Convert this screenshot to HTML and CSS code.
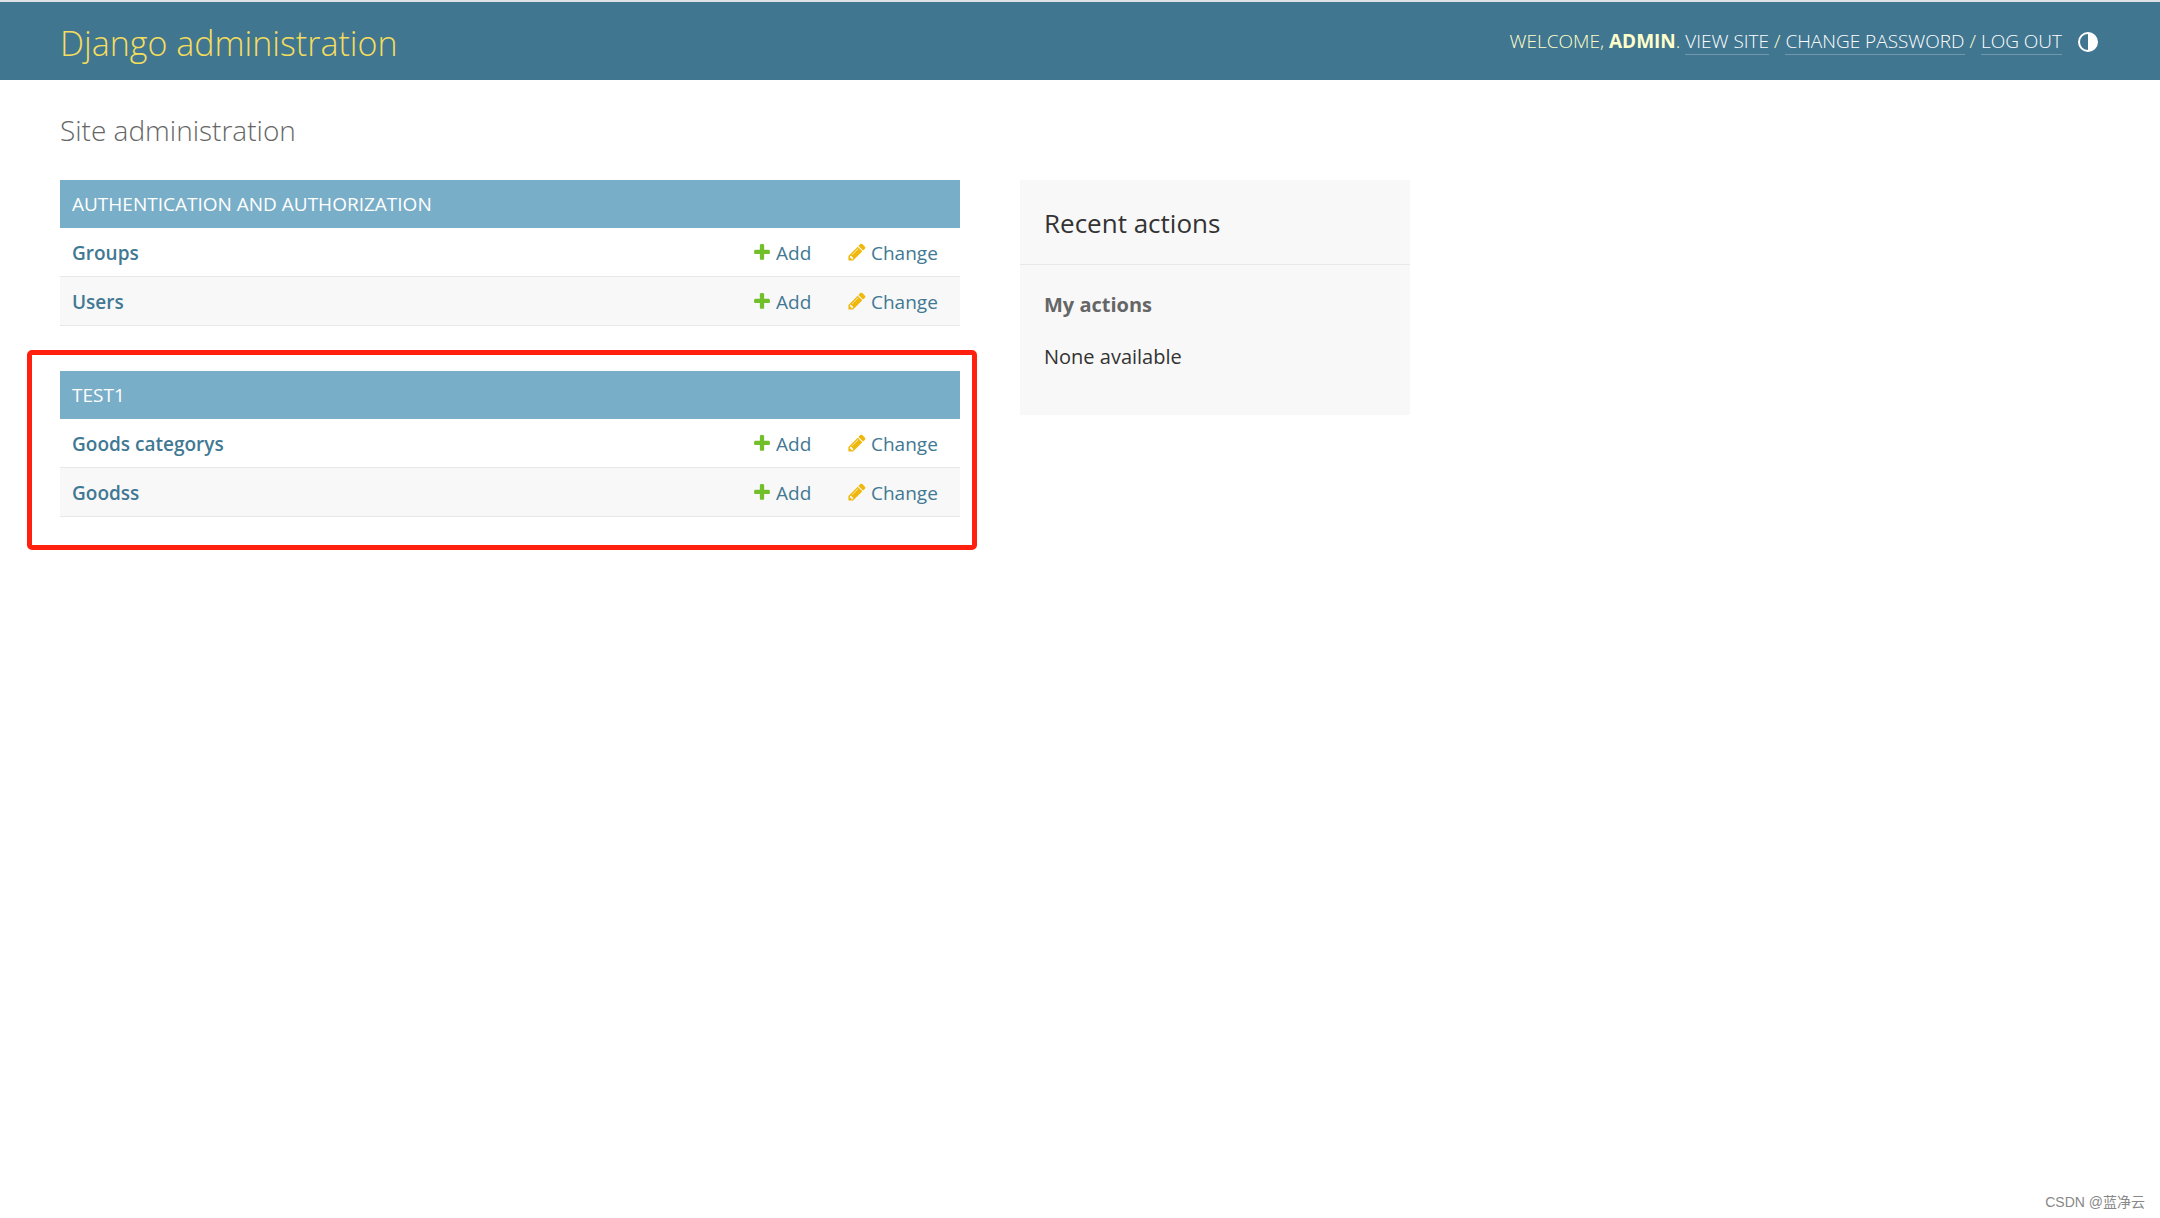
FILE: index.html
```html
<!DOCTYPE html>
<html lang="en">
<head>
<meta charset="utf-8">
<title>Site administration | Django site admin</title>
<meta name="viewport" content="width=device-width, initial-scale=1">
<link rel="stylesheet" href="styles.css">
</head>
<body>
<svg class="sprite" aria-hidden="true">
  <symbol id="icon-add" viewBox="0 0 1792 1792"><path fill="#70bf2b" d="M1600 796v192q0 40-28 68t-68 28h-416v416q0 40-28 68t-68 28h-192q-40 0-68-28t-28-68v-416h-416q-40 0-68-28t-28-68v-192q0-40 28-68t68-28h416v-416q0-40 28-68t68-28h192q40 0 68 28t28 68v416h416q40 0 68 28t28 68z"/></symbol>
  <symbol id="icon-change" viewBox="0 0 1792 1792"><path fill="#efb80b" d="M491 1536l91-91-235-235-91 91v107h128v128h107zm523-928q0-22-22-22-10 0-17 7l-542 542q-7 7-7 17 0 22 22 22 10 0 17-7l542-542q7-7 7-17zm-54-192l416 416-832 832h-416v-416zm683 96q0 53-37 90l-166 166-416-416 166-165q36-38 90-38 53 0 91 38l235 234q37 39 37 91z"/></symbol>
</svg>
<header class="header">
  <div class="site-name"><a href="#">Django administration</a></div>
  <div class="user-tools">
    <span>Welcome, <strong>admin</strong>. <a href="#">View site</a> / <a href="#">Change password</a> / <a href="#">Log out</a></span>
    <button class="theme-toggle" type="button" aria-label="Toggle theme">
      <svg viewBox="0 0 20 20"><circle cx="10" cy="10" r="9" fill="none" stroke="#fff" stroke-width="2"/><path d="M10 1a9 9 0 0 1 0 18z" fill="#fff"/></svg>
    </button>
  </div>
</header>
<main class="content">
  <h1>Site administration</h1>
  <div class="columns">
    <div class="apps">
      <div class="module">
        <table>
          <caption><a href="#">Authentication and Authorization</a></caption>
          <tbody>
            <tr><th scope="row"><a href="#">Groups</a></th><td class="add"><a href="#"><svg class="icon"><use href="#icon-add"/></svg>Add</a></td><td class="change"><a href="#"><svg class="icon"><use href="#icon-change"/></svg>Change</a></td></tr>
            <tr><th scope="row"><a href="#">Users</a></th><td class="add"><a href="#"><svg class="icon"><use href="#icon-add"/></svg>Add</a></td><td class="change"><a href="#"><svg class="icon"><use href="#icon-change"/></svg>Change</a></td></tr>
          </tbody>
        </table>
      </div>
      <div class="module marked">
        <table>
          <caption><a href="#">Test1</a></caption>
          <tbody>
            <tr><th scope="row"><a href="#">Goods categorys</a></th><td class="add"><a href="#"><svg class="icon"><use href="#icon-add"/></svg>Add</a></td><td class="change"><a href="#"><svg class="icon"><use href="#icon-change"/></svg>Change</a></td></tr>
            <tr><th scope="row"><a href="#">Goodss</a></th><td class="add"><a href="#"><svg class="icon"><use href="#icon-add"/></svg>Add</a></td><td class="change"><a href="#"><svg class="icon"><use href="#icon-change"/></svg>Change</a></td></tr>
          </tbody>
        </table>
      </div>
    </div>
    <aside class="recent">
      <h2>Recent actions</h2>
      <h3>My actions</h3>
      <p>None available</p>
    </aside>
  </div>
</main>
<footer class="watermark">CSDN @蓝净云</footer>
</body>
</html>
```
FILE: styles.css
```css
* {
  box-sizing: border-box;
}

body {
  margin: 0;
  min-height: 100vh;
  display: flex;
  flex-direction: column;
  background: #fff;
  color: #333;
  font: 400 20px/24px "Open Sans", "Noto Sans", sans-serif;
}

a {
  color: #417893;
  text-decoration: none;
}

.sprite {
  display: none;
}

.header {
  display: flex;
  justify-content: space-between;
  align-items: center;
  height: 80px;
  padding: 2px 62px 0 60px;
  border-top: 2px solid #dee1e6;
  background: #417690;
  color: #ffc;
}

.site-name {
  padding-top: 2px;
  font-size: 34px;
  font-weight: 300;
  line-height: 48px;
}

.site-name a {
  color: #f5dd5d;
}

.user-tools {
  display: flex;
  align-items: center;
  gap: 16px;
  font-size: 19px;
  font-weight: 300;
  text-transform: uppercase;
}

.user-tools span {
  padding-bottom: 2px;
}

.user-tools strong {
  font-weight: 700;
}

.user-tools a {
  color: #fff;
  border-bottom: 1px solid rgba(255, 255, 255, 0.25);
}

.theme-toggle {
  width: 20px;
  height: 20px;
  padding: 0;
  border: 0;
  background: none;
}

.theme-toggle svg {
  display: block;
}

.content {
  flex: 1;
  padding: 30px 60px;
}

h1 {
  margin: 0 0 30px;
  color: #666;
  font-size: 28px;
  font-weight: 300;
  line-height: 40px;
}

.columns {
  display: flex;
  align-items: flex-start;
  gap: 60px;
}

.apps {
  flex: 0 1 900px;
  display: flex;
  flex-direction: column;
  gap: 45px;
}

.module {
  position: relative;
}

.marked::after {
  content: "";
  position: absolute;
  inset: -21px -17px -33px -33px;
  border: 5px solid #ff2010;
  border-radius: 5px;
  pointer-events: none;
}

table {
  width: 100%;
  border-collapse: separate;
  border-spacing: 0;
}

caption {
  padding: 12px;
  background: #79aec8;
  font-size: 19px;
  text-align: left;
  text-transform: uppercase;
}

caption a {
  color: #fff;
}

th,
td {
  height: 49px;
  padding: 2px 12px 0;
  border-bottom: 1px solid #e8e8e8;
  font-weight: 400;
  text-align: left;
}

th {
  font-weight: 600;
  font-size: 19px;
}

tr:nth-child(even) {
  background: #f8f8f8;
}

.add {
  width: 95px;
}

.change {
  width: 125px;
}

td a {
  display: flex;
  align-items: center;
  gap: 4px;
  font-size: 19px;
}

.icon {
  flex: none;
  width: 20px;
  height: 20px;
  margin-bottom: 2px;
}

.recent {
  flex: 0 1 390px;
  padding-bottom: 46px;
  background: #f8f8f8;
}

.recent h2 {
  margin: 0 0 28px;
  padding: 25px 24px 23px;
  border-bottom: 1px solid #e8e8e8;
  font-size: 26px;
  font-weight: 400;
  line-height: 36px;
}

.recent h3 {
  margin: 0 24px 28px;
  color: #666;
  font-size: 20px;
  font-weight: 700;
}

.recent p {
  margin: 0 24px;
}

.watermark {
  padding: 0 15px 4px;
  color: #888;
  font: 14px/24px "Liberation Sans", "Noto Sans CJK SC", sans-serif;
  text-align: right;
}
```
